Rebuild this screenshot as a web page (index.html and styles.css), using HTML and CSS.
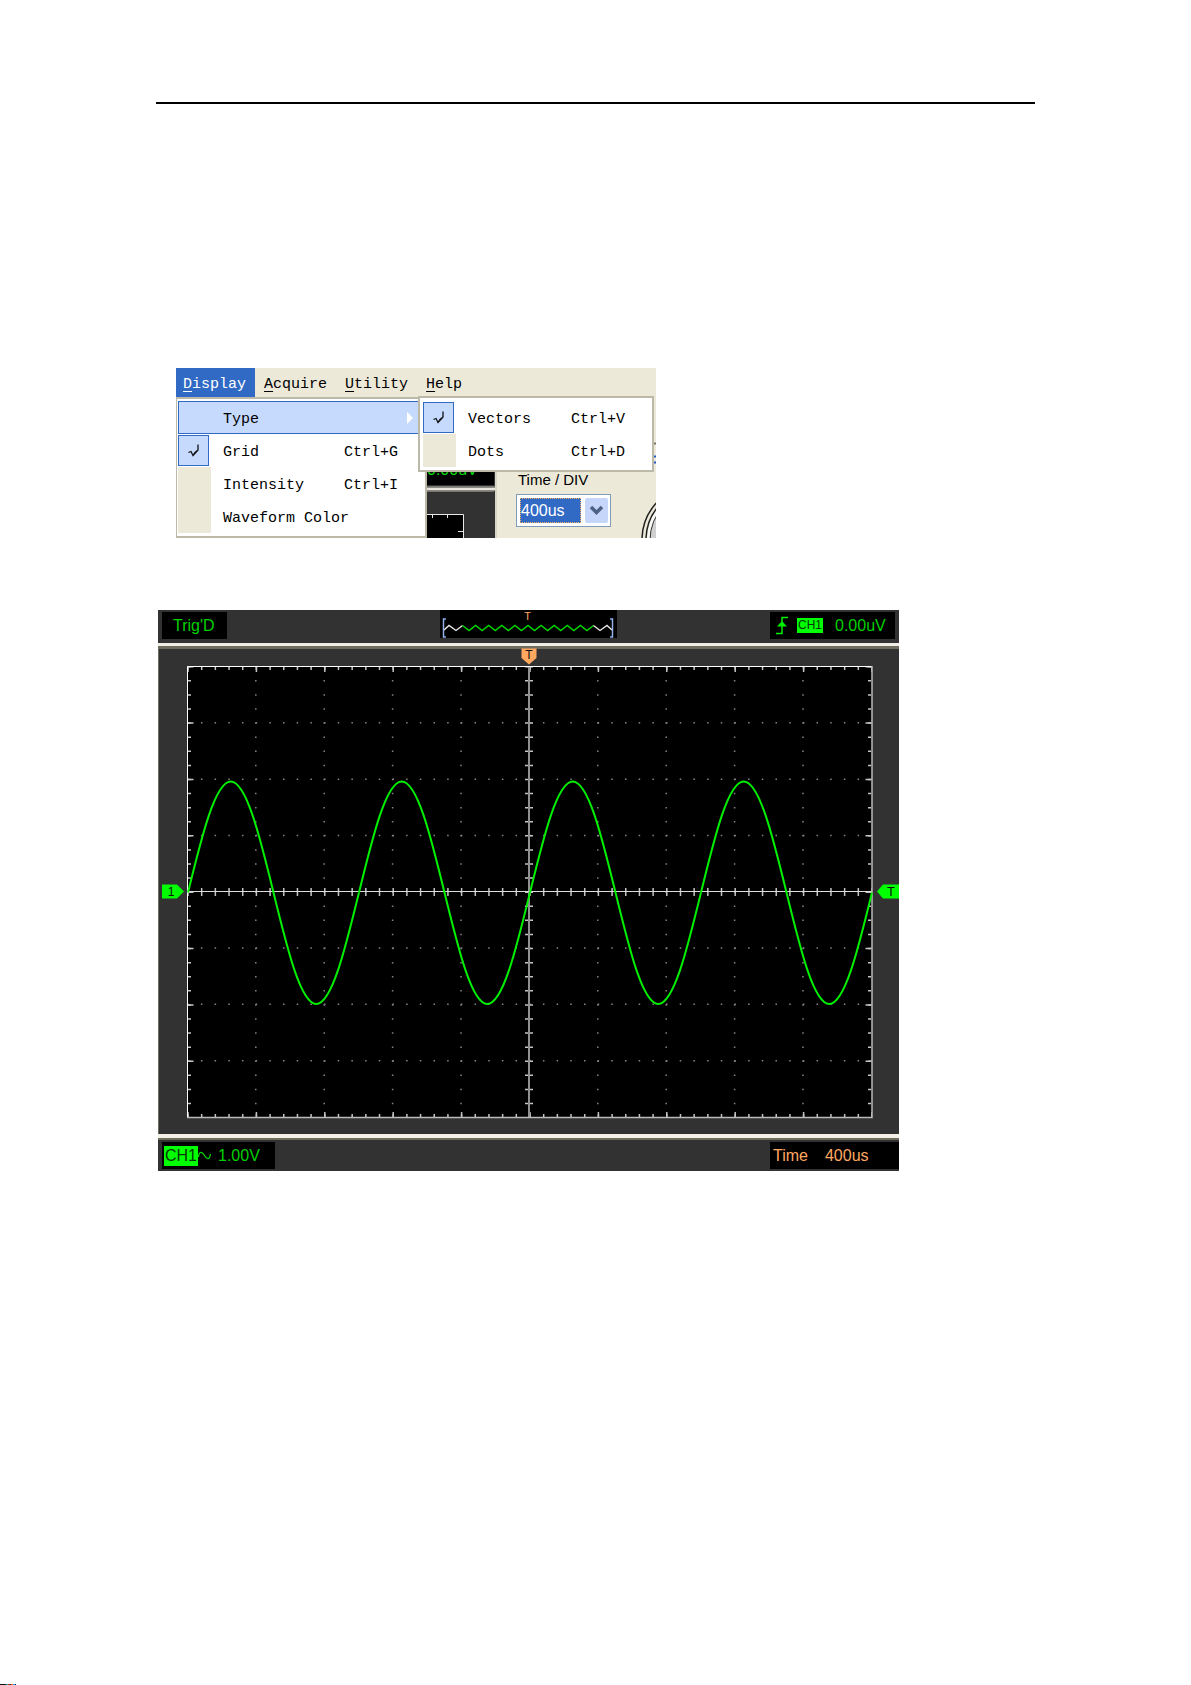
FILE: index.html
```html
<!DOCTYPE html>
<html lang="en">
<head>
<meta charset="utf-8">
<title>Display menu</title>
<link rel="stylesheet" href="styles.css">
</head>
<body>
<main class="page">
  <hr class="page-rule">

  <section class="app">
    <nav class="menubar">
      <button class="menubar-item is-open"><u>D</u>isplay</button>
      <button class="menubar-item"><u>A</u>cquire</button>
      <button class="menubar-item"><u>U</u>tility</button>
      <button class="menubar-item"><u>H</u>elp</button>
    </nav>
    <div class="workspace">
      <div class="menu menu-main">
        <button class="menu-item is-active"><span class="label">Type</span>
          <svg class="arrow" width="6" height="12" viewBox="0 0 6 12"><path d="M0 0L6 6L0 12Z" fill="#fff"/></svg>
        </button>
        <button class="menu-item"><span class="gutter is-checked"><svg width="12" height="16" viewBox="0 0 12 16"><path d="M0.500 9.500L3 8.500L5 12.500L7 9.500L10 7V1.500M5 12.500L10 7" fill="none" stroke="#111" stroke-width="1.300"/></svg></span><span class="label">Grid</span><span class="keys">Ctrl+G</span></button>
        <button class="menu-item"><span class="gutter"></span><span class="label">Intensity</span><span class="keys">Ctrl+I</span></button>
        <button class="menu-item"><span class="gutter"></span><span class="label">Waveform Color</span></button>
      </div>
      <svg class="scope-slice" width="70" height="141" viewBox="0 0 70 141">
        <rect width="70" height="141" fill="#323232"/>
        <rect width="67" height="88" fill="#000"/>
        <text x="0" y="78" font-size="16" fill="#00dc00">0.00uV</text>
        <path d="M0 89.500H69" stroke="#77776a"/>
        <path d="M0 92H69" stroke="#e8e4dc" stroke-width="3"/>
        <path d="M0 94.500H67" stroke="#77776a"/>
        <path d="M69 0V141" stroke="#d8d4c8" stroke-width="2"/>
        <rect y="117" width="36" height="24" fill="#000"/>
        <path d="M0 117.500H36.500V141M5.500 118V121M20.500 118V121M31 134.500H36" fill="none" stroke="#e8e8e8"/>
      </svg>
      <div class="controls">
        <label class="field-label" for="time-div">Time / DIV</label>
        <div class="combo">
          <select id="time-div" class="combo-value"><option>400us</option></select>
          <span class="combo-arrow"><svg width="15" height="11" viewBox="0 0 15 11"><path d="M2 2L7.500 7.500L13 2" fill="none" stroke="#4d6185" stroke-width="3.500"/></svg></span>
        </div>
        <svg class="knob" width="20" height="141" viewBox="0 0 20 141">
          <circle cx="61" cy="143" r="55" fill="#ece9d8" stroke="#222" stroke-width="1.500"/>
          <circle cx="62" cy="143" r="52" fill="#f8f8f4" stroke="#222" stroke-width="1.500"/>
          <circle cx="63" cy="143" r="49" fill="#d0d0d0" stroke="#333"/>
          <path d="M17 46.500H20" stroke="#77776a" stroke-width="2"/>
          <path d="M17 59.500H20M17 65.500H20" stroke="#2458c8" stroke-width="2"/>
        </svg>
      </div>
      <div class="menu menu-sub">
        <button class="menu-item"><span class="gutter is-checked"><svg width="12" height="16" viewBox="0 0 12 16"><path d="M0.500 9.500L3 8.500L5 12.500L7 9.500L10 7V1.500M5 12.500L10 7" fill="none" stroke="#111" stroke-width="1.300"/></svg></span><span class="label">Vectors</span><span class="keys">Ctrl+V</span></button>
        <button class="menu-item"><span class="gutter"></span><span class="label">Dots</span><span class="keys">Ctrl+D</span></button>
      </div>
    </div>
  </section>

  <section class="scope">
    <header class="scope-top">
      <div class="readout status">Trig'D</div>
      <svg class="preview" viewBox="0 0 177 28">
        <rect width="177" height="28" fill="#000"/>
        <path d="M6 9H3.500V27H6M170 9H172.500V27H170" fill="none" stroke="#8fb0e8" stroke-width="1.500"/>
        <path d="M4 20L9 15.500L16 20.500L22.500 15.500" fill="none" stroke="#e8e8e8" stroke-width="1.400"/>
        <path d="M22.500 15.500l6.550 5l6.550 -5l6.550 5l6.550 -5l6.550 5l6.550 -5l6.550 5l6.550 -5l6.550 5l6.550 -5l6.550 5l6.550 -5l6.550 5l6.550 -5l6.550 5l6.550 -5l6.550 5l6.550 -5l6.550 5l6.550 -5" fill="none" stroke="#00d800" stroke-width="1.400"/>
        <path d="M153.500 15.500L160 20.500L167 15.500L172 20" fill="none" stroke="#e8e8e8" stroke-width="1.400"/>
        <text x="87.500" y="10" font-size="11" text-anchor="middle" fill="#ffa860">T</text>
      </svg>
      <div class="readout trigger">
        <svg width="12" height="19" viewBox="0 0 12 19"><path d="M0 17.500H6V1.500H12" fill="none" stroke="#00f000" stroke-width="1.500"/><path d="M1 10.500L6 5L11 10.500Z" fill="#00f000"/></svg>
        <span class="badge badge-small">CH1</span>
        <span>0.00uV</span>
      </div>
    </header>

    <svg class="plot" viewBox="158 645 741 488">
      <path d="M158 646.500H899" stroke="#6f6d5e" stroke-width="3"/>
      <path d="M158.500 645V1133" stroke="#6f6d5e"/>
      <defs>
        <path id="cycle" d="M188 891.500c13.940 -57.100 27.280 -111 42.750 -111c15.470 0 28.810 53.900 42.750 111c13.940 57.100 27.280 111.500 42.750 111.500c15.470 0 28.810 -54.400 42.750 -111.500"/>
      </defs>
      <rect x="187.500" y="665.500" width="684.500" height="451" fill="#000"/>
      <g stroke="#858585" stroke-width="1.500" fill="none">
        <g stroke-dasharray="1.500 12.180">
          <path d="M187.250 721.800H872M187.250 778.200H872M187.250 834.500H872M187.250 947H872M187.250 1003.300H872M187.250 1059.700H872"/>
        </g>
        <g stroke-dasharray="1.500 12.590">
          <path d="M255.800 665V1116M324.200 665V1116M392.600 665V1116M461 665V1116M597.800 665V1116M666.200 665V1116M734.600 665V1116M803 665V1116"/>
        </g>
      </g>
      <g stroke="#c4c4c4" fill="none">
        <path stroke-width="3" stroke-dasharray="1.500 12.180" d="M187.250 667.500H872M187.250 1114.500H872"/>
        <path stroke-width="5" stroke-dasharray="1.500 66.900" d="M187.250 668.500H872M187.250 1113.500H872"/>
        <path stroke-width="8" stroke-dasharray="1.500 12.180" d="M187.250 891H872"/>
        <path stroke-width="3" stroke-dasharray="1.500 12.590" d="M189.500 665V1116M869.500 665V1116"/>
        <path stroke-width="6" stroke-dasharray="1.500 54.860" d="M190.500 665V1116M868.500 665V1116"/>
        <path stroke-width="8" stroke-dasharray="1.500 12.590" d="M529 665V1116"/>
      </g>
      <path d="M529 665.500V1116.500" stroke="#919191" stroke-width="2"/>
      <path d="M187.500 890.500H872" stroke="#dcdcdc"/>
      <path d="M187.500 1117V665.500H872" stroke="#fff" fill="none"/>
      <path d="M187 1116.500H872V665" stroke="#bababa" stroke-width="1.500" fill="none"/>
      <g stroke="#00f000" stroke-width="2" fill="none">
        <use href="#cycle"/><use href="#cycle" x="171"/><use href="#cycle" x="342"/><use href="#cycle" x="513"/>
      </g>
      <path d="M521.500 647.500H536.500V657L529 663.500L521.500 657Z" fill="#ffa860"/>
      <path d="M162 883.500H177L184 890.500L177 897.500H162Z" fill="#0f0"/>
      <path d="M899 883.500H883L877 890.500L883 897.500H899Z" fill="#0f0"/>
      <g text-anchor="middle" fill="#111">
        <text x="529" y="658" font-size="12">T</text>
        <text x="171" y="895" font-size="12">1</text>
        <text x="891" y="895" font-size="13">T</text>
      </g>
    </svg>

    <footer class="scope-bottom">
      <div class="readout channel"><span class="badge">CH1</span>
        <svg width="13" height="9" viewBox="0 0 13 9"><path d="M0.500 6C1 0 4 0 6.500 4.500S11.500 9 12.500 3" fill="none" stroke="#00d800" stroke-width="1.300"/></svg>
        <span class="volts">1.00V</span></div>
      <div class="readout timebase"><span>Time</span><span>400us</span></div>
    </footer>
  </section>
</main>
<div class="color-strip"></div>
</body>
</html>
```
FILE: styles.css
```css
* { box-sizing: border-box; }

body {
  margin: 0;
  min-height: 100vh;
  display: flex;
  flex-direction: column;
  background: #fff;
  font-family: "Liberation Sans", Arial, sans-serif;
  font-size: 16px;
}

button {
  border: 0;
  padding: 0;
  background: none;
  color: #000;
  font: 15px/18px "Liberation Mono", "Courier New", monospace;
  text-align: left;
}

svg { display: block; }

.page { padding: 102px 156px 0; }

.page-rule {
  margin: 0;
  border: 0;
  border-top: 2px solid #000;
}

/* Application window with the open Display menu */
.app {
  max-width: 480px;
  margin: 264px 0 0 20px;
  background: #ece9d8;
}

.menubar {
  display: flex;
  gap: 2px;
  height: 29px;
}

.menubar-item { padding: 4px 9px 0 7px; }
.menubar-item u { text-underline-offset: 3px; }
.menubar-item.is-open { background: #316ac5; color: #fff; }

.workspace {
  position: relative;
  display: flex;
}

.menu {
  background: #fff;
  border: 2px solid #bdb9a8;
}

.menu-main {
  flex: none;
  width: 251px;
  padding: 2px 1px 3px;
  border-left-width: 1px;
}

.menu-sub {
  position: absolute;
  top: -1px;
  left: 242px;
  width: 236px;
  padding: 3px;
}

.menu-item {
  display: flex;
  align-items: center;
  width: 100%;
  height: 33px;
  padding-right: 26px;
}

.menu-sub .menu-item { padding-right: 24px; }

.label,
.keys { padding-top: 4px; }

.label { flex: 1; margin-left: 12px; }

.gutter {
  display: flex;
  align-items: center;
  justify-content: center;
  width: 33px;
  height: 33px;
  background: #ece9d8;
}

.gutter.is-checked {
  width: 31px;
  height: 31px;
  margin-right: 2px;
  background: #c6dafe;
  border: 1px solid #316ac5;
}

.menu-item.is-active {
  padding-right: 10px;
  background: #c6dafe;
  border: 1px solid #316ac5;
}

.menu-item.is-active .label { margin-left: 44px; }

.scope-slice { flex: none; }

.controls {
  position: relative;
  flex: 1;
  padding: 73px 0 0 19px;
}

.field-label {
  display: block;
  margin-left: 2px;
  font-size: 15px;
  line-height: 20px;
}

.combo {
  display: flex;
  width: 95px;
  height: 33px;
  margin-top: 4px;
  padding: 3px 2px 3px 3px;
  gap: 4px;
  background: #fff;
  border: 1px solid #7f9db9;
}

.combo-value {
  appearance: none;
  width: 61px;
  padding: 0;
  border: 1px dotted #ffb060;
  border-radius: 0;
  background: #316ac5;
  color: #fff;
  font: 16px/20px "Liberation Sans", Arial, sans-serif;
}

.combo-arrow {
  display: flex;
  flex: 1;
  align-items: center;
  justify-content: center;
  border-radius: 2px;
  background: #c6d6fb;
}

.knob {
  position: absolute;
  right: 0;
  bottom: 0;
}

/* Oscilloscope screen */
.scope {
  max-width: 741px;
  margin: 72px 0 0 2px;
  background: #323232;
}

.scope-top {
  display: grid;
  grid-template-columns: 1fr 177px 1fr;
  padding: 0 4px 4px;
  border-bottom: 3px solid #f0ece8;
}

.scope-top .readout { margin-top: 2px; }

.readout {
  display: flex;
  align-items: center;
  height: 27px;
  background: #000;
  color: #00d000;
  line-height: 20px;
}

.status { width: 65px; padding-left: 11px; }

.trigger {
  justify-self: end;
  width: 125px;
  padding-left: 6px;
  gap: 9px;
}

.trigger .badge { margin-right: 3px; }

.badge {
  padding: 0 1px;
  background: #0f0;
  color: #063806;
}

.badge-small { font-size: 12px; line-height: 15px; }

.plot { width: 100%; }

.scope-bottom {
  display: flex;
  justify-content: space-between;
  padding: 4px 0 2px 4px;
  border-top: 4px solid #f4f0e8;
  box-shadow: inset 0 2px #6f6d5e;
}

.channel { width: 113px; padding-left: 2px; }
.channel .volts { margin-left: 7px; }

.timebase { width: 129px; padding-left: 3px; gap: 17px; color: #ffa860; }

.color-strip {
  width: 16px;
  height: 1px;
  margin-top: auto;
  background: linear-gradient(90deg, #111 0 6px, #29a 6px 8px, #a33 8px 10px, #222 10px 11px, #f52 11px 13px, #2ad 13px 15px, #125 15px);
}
```
